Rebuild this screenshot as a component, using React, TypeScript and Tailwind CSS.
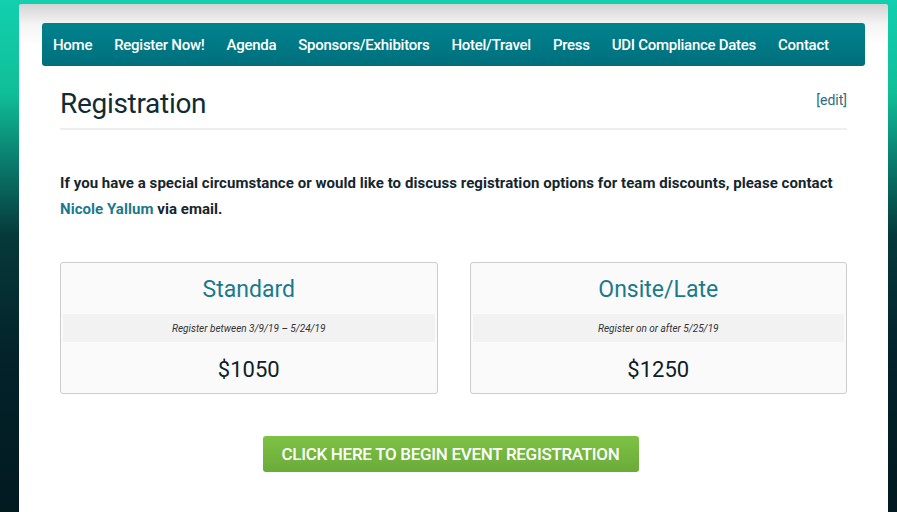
const navLinks = [
  'Home',
  'Register Now!',
  'Agenda',
  'Sponsors/Exhibitors',
  'Hotel/Travel',
  'Press',
  'UDI Compliance Dates',
  'Contact',
];

const tiers = [
  { name: 'Standard', note: 'Register between 3/9/19 – 5/24/19', price: '$1050' },
  { name: 'Onsite/Late', note: 'Register on or after 5/25/19', price: '$1250' },
];

export default function App() {
  return (
    <div className="min-h-[512px] overflow-hidden bg-[linear-gradient(to_bottom,#12cfae_0%,#10bf98_18%,#0a7a6c_32%,#06393a_46%,#03222a_70%,#021a20_100%)] font-['Roboto',sans-serif]">
      <div className="ml-[19px] mt-[4px] w-[869px] min-h-[508px] rounded-t-[2px] bg-[linear-gradient(to_bottom,#d4d4d4_0px,#f4f4f4_20px,#ffffff_42px)] px-[23px] pt-[19px]">
        {/* Main navigation */}
        <nav className="flex h-[43px] items-center rounded-[3px] bg-[linear-gradient(to_bottom,#00838f,#006f7c)] pt-[2px]">
          {navLinks.map((label) => (
            <a
              key={label}
              href="#"
              className="px-[11px] text-[15px] font-medium tracking-[-0.27px] text-white">
              {label}
            </a>
          ))}
        </nav>

        <div className="px-[18px]">
          {/* Page title */}
          <div className="mt-[20px] flex items-start justify-between border-b-2 border-[#eeeeee] pb-[6px]">
            <h1 className="text-[28px] leading-[36px] tracking-[-0.3px] text-[#0f2b36]">Registration</h1>
            <a href="#" className="mt-[4px] text-[14px] text-[#2b6d7e]">
              [edit]
            </a>
          </div>

          <p className="mt-[40px] text-[15px] font-bold leading-[26px] tracking-[0.05px] text-[#14262e]">
            If you have a special circumstance or would like to discuss registration options for team
            discounts, please contact <a href="#" className="text-[#1a7a8c]">Nicole Yallum</a> via email.
          </p>

          {/* Pricing tiers */}
          <div className="mt-[40px] grid grid-cols-2 gap-[32px]">
            {tiers.map((tier) => (
              <div
                key={tier.name}
                className="rounded-[3px] border border-[#cccccc] bg-[#fafafa]">
                <div className="flex h-[51px] items-center justify-center pt-[4px] text-[23px] text-[#1a7a8c]">
                  {tier.name}
                </div>
                <div className="mx-[2px] flex h-[28px] items-center justify-center bg-[#f2f2f2] text-[10px] italic text-[#333]">
                  {tier.note}
                </div>
                <div className="flex h-[51px] items-center justify-center pt-[4px] text-[22px] text-[#0f2026]">
                  {tier.price}
                </div>
              </div>
            ))}
          </div>

          <div className="mt-[42px] flex justify-center pr-[6px]">
            <a
              href="#"
              className="flex h-[36px] w-[376px] items-center justify-center rounded-[3px] bg-[linear-gradient(to_bottom,#7dc244,#6aab3a)] pt-[1px] text-[17px] font-medium uppercase tracking-[-0.3px] text-white">
              Click here to begin event registration
            </a>
          </div>
        </div>
      </div>
    </div>
  );
}
